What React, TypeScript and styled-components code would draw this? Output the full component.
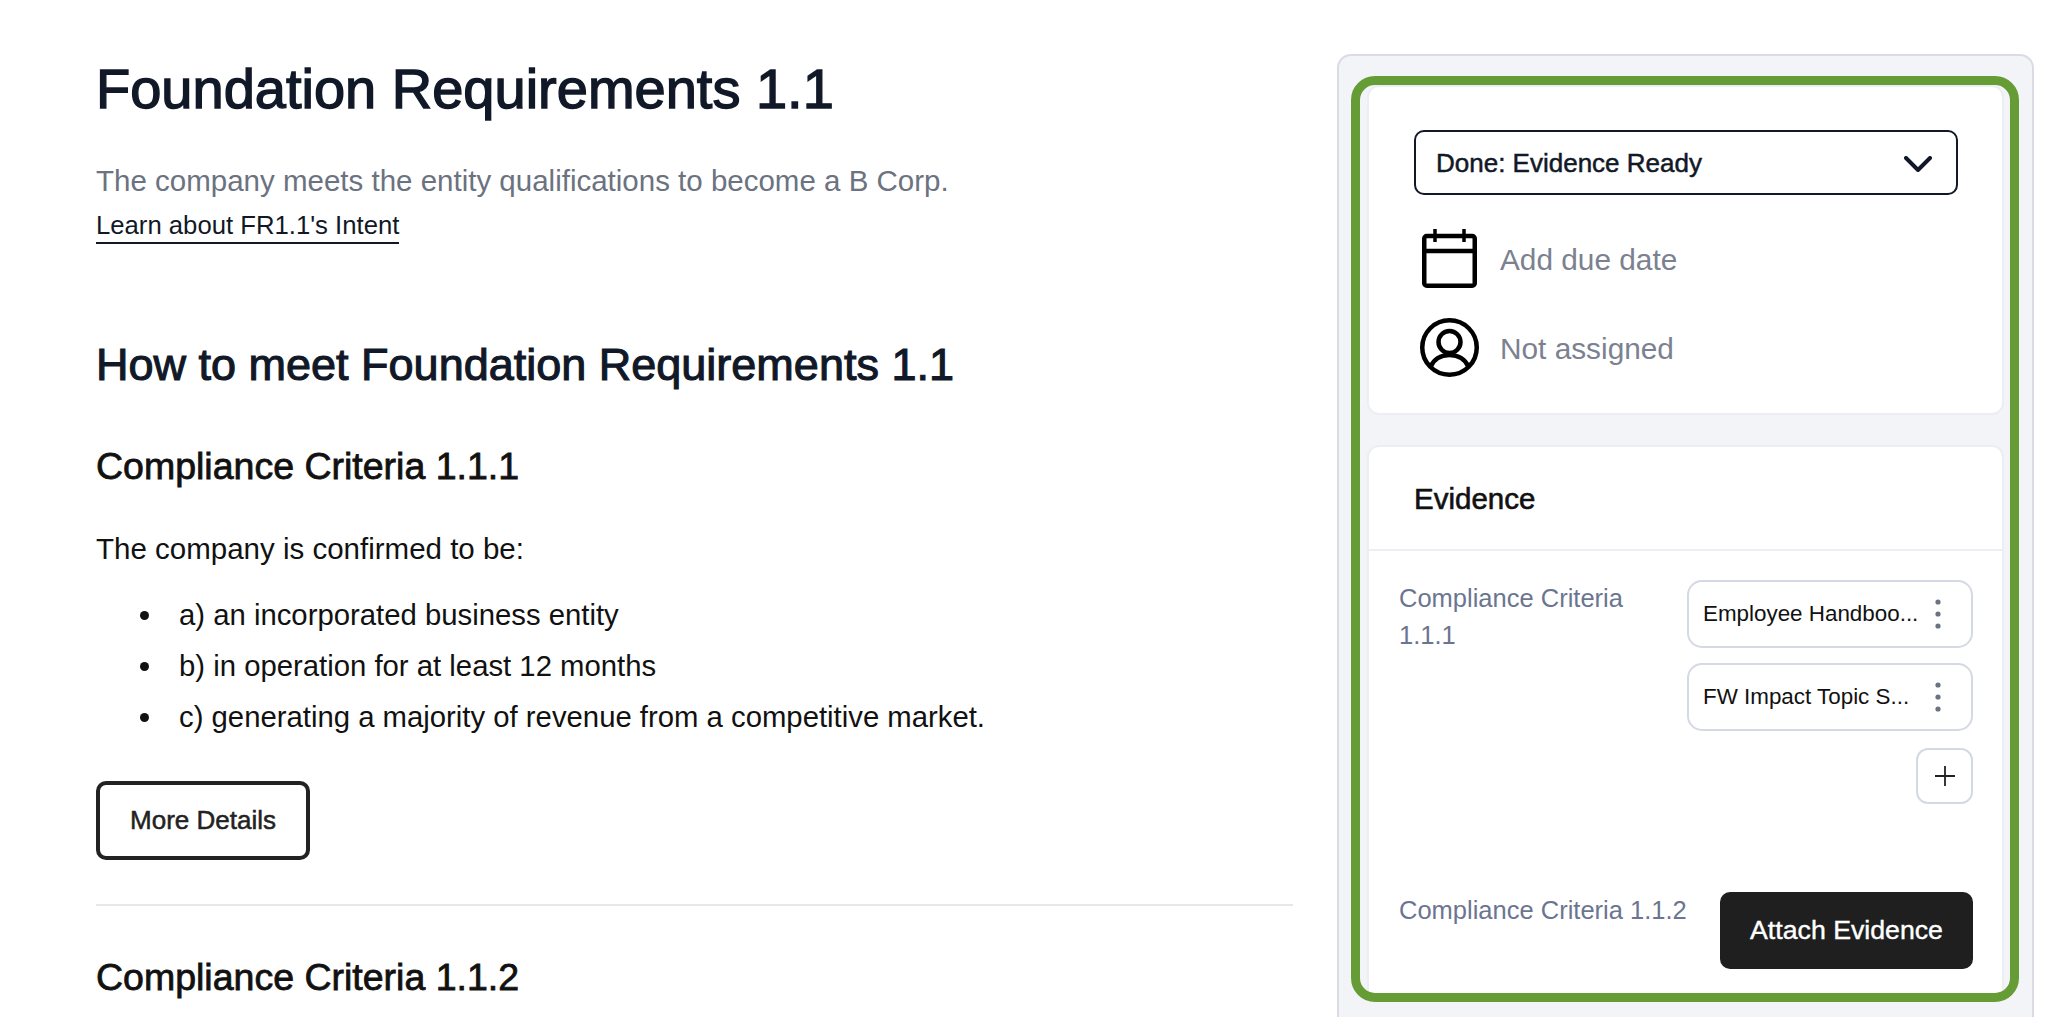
import React from "react";
import styled, { createGlobalStyle } from "styled-components";

const Global = createGlobalStyle`
  html, body { margin: 0; padding: 0; background: #fff; height: 100%; overflow: hidden; }
  body { font-family: "Liberation Sans", Arial, sans-serif; }
  * { box-sizing: border-box; }
`;

const Page = styled.div`
  display: flex;
  align-items: flex-start;
  gap: 44px;
  height: 1017px;
  padding-left: 96px;
  overflow: hidden;
`;

const Main = styled.main`
  flex: 0 0 1197px;
  display: flex;
  flex-direction: column;
  align-items: flex-start;
  padding-top: 57px;
`;

const Title = styled.h1`
  margin: 0;
  font-size: 56px;
  line-height: 64px;
  font-weight: 400;
  -webkit-text-stroke: 1.4px #111827;
  color: #111827;
`;

const Subtitle = styled.p`
  margin: 42px 0 0;
  font-size: 29.5px;
  line-height: 36px;
  color: #6b7280;
`;

const IntentLink = styled.a`
  margin-top: 10px;
  font-size: 25.7px;
  line-height: 33px;
  color: #111827;
  border-bottom: 2px solid #111827;
`;

const SectionHeading = styled.h2`
  margin: 95px 0 0;
  font-size: 45px;
  line-height: 52px;
  font-weight: 400;
  -webkit-text-stroke: 1.1px #111827;
  color: #111827;
`;

const CriteriaHeading = styled.h3<{ $top: number }>`
  margin: ${(p) => p.$top}px 0 0;
  font-size: 37.5px;
  line-height: 44px;
  font-weight: 400;
  -webkit-text-stroke: 0.8px #111;
  color: #111;
`;

const Paragraph = styled.p`
  margin: 42px 0 0;
  font-size: 29.5px;
  line-height: 38px;
  color: #111;
`;

const Bullets = styled.ul`
  margin: 28px 0 0;
  padding: 0 0 0 44px;
  list-style: none;
  display: flex;
  flex-direction: column;
  gap: 13px;
  font-size: 29.3px;
  line-height: 38px;
  color: #111;
`;

const Bullet = styled.li`
  display: flex;
  align-items: center;
  gap: 30px;

  &::before {
    content: "";
    flex: 0 0 9px;
    height: 9px;
    border-radius: 50%;
    background: #111;
  }
`;

const OutlineButton = styled.button`
  margin-top: 45px;
  width: 214px;
  height: 79px;
  border: 4px solid #222;
  border-radius: 10px;
  background: #fff;
  color: #222;
  font: 400 26px "Liberation Sans", Arial, sans-serif;
  -webkit-text-stroke: 0.5px #222;
`;

const Divider = styled.hr`
  align-self: stretch;
  margin: 44px 0 0;
  border: 0;
  height: 2px;
  background: #e5e7eb;
`;

const Panel = styled.aside`
  position: relative;
  flex: 0 0 697px;
  margin-top: 54px;
  height: 1100px;
  padding: 29px 28px 0;
  background: #f3f4f8;
  border: 2px solid #d9dce5;
  border-radius: 14px;
  display: flex;
  flex-direction: column;
  gap: 30px;
`;

const Highlight = styled.div`
  position: absolute;
  left: 12px;
  right: 13px;
  top: 20px;
  height: 926px;
  border: 9px solid #669c35;
  border-radius: 24px;
  pointer-events: none;
`;

const Card = styled.section`
  background: #fff;
  border: 2px solid #eceef3;
  border-radius: 12px;
`;

const StatusCard = styled(Card)`
  height: 330px;
  padding: 43px 44px 0 45px;
  display: flex;
  flex-direction: column;
`;

const StatusSelect = styled.div`
  height: 65px;
  display: flex;
  align-items: center;
  justify-content: space-between;
  padding: 2px 24px 0 20px;
  border: 2px solid #111827;
  border-radius: 10px;
  font-size: 26px;
  -webkit-text-stroke: 0.5px #111827;
  color: #111827;
`;

const MetaRow = styled.div<{ $top: number }>`
  margin-top: ${(p) => p.$top}px;
  display: flex;
  align-items: center;
  gap: 21px;
  padding-left: 6px;
  font-size: 29.8px;
  color: #7b8190;
`;

const MetaText = styled.span`
  padding-top: 3px;
`;

const IconSlot = styled.span`
  flex: 0 0 59px;
  display: flex;
  justify-content: center;
`;

const EvidenceCard = styled(Card)`
  height: 550px;
  border-bottom-color: transparent;
  border-radius: 12px 12px 0 0;
`;

const EvidenceHeader = styled.div`
  height: 104px;
  display: flex;
  align-items: center;
  padding: 1px 0 0 45px;
  border-bottom: 2px solid #eceef3;
  font-size: 29.5px;
  -webkit-text-stroke: 0.6px #111;
  color: #111;
`;

const EvidenceBody = styled.div`
  padding: 29px 29px 0 30px;
  display: flex;
  flex-direction: column;
  gap: 88px;
`;

const EvidenceRow = styled.div`
  display: flex;
  justify-content: space-between;
  align-items: flex-start;
`;

const CriteriaLabel = styled.div<{ $wide?: boolean }>`
  width: ${(p) => (p.$wide ? "290px" : "250px")};
  font-size: 25.5px;
  line-height: 37px;
  color: #6b7590;
`;

const Attachments = styled.div`
  width: 286px;
  display: flex;
  flex-direction: column;
  align-items: flex-end;
  gap: 15px;
`;

const Chip = styled.div`
  width: 100%;
  height: 68px;
  display: flex;
  align-items: center;
  justify-content: space-between;
  padding: 0 30px 0 14px;
  background: #fff;
  border: 2px solid #d5d9e4;
  border-radius: 15px;
  font-size: 22.4px;
  color: #111;
`;

const AddButton = styled.button`
  width: 57px;
  height: 56px;
  margin-top: 2px;
  display: flex;
  align-items: center;
  justify-content: center;
  padding: 0;
  background: #fff;
  border: 2px solid #d5d9e4;
  border-radius: 12px;
`;

const AttachButton = styled.button`
  flex: 0 0 253px;
  height: 77px;
  background: #1f1f1f;
  border: 0;
  border-radius: 10px;
  color: #fff;
  font: 400 26.7px "Liberation Sans", Arial, sans-serif;
  -webkit-text-stroke: 0.4px #fff;
`;

const Chevron = () => (
  <svg width="28" height="16" viewBox="0 0 28 16" fill="none" stroke="#111827" strokeWidth="4" strokeLinecap="round" strokeLinejoin="round">
    <path d="M2 2l12 12L26 2" />
  </svg>
);

const Calendar = () => (
  <svg width="55" height="59" viewBox="0 0 55 59" fill="none" stroke="#000" strokeWidth="4.5">
    <rect x="2.25" y="7" width="50.5" height="49.75" rx="2.5" />
    <path d="M2 22h51" />
    <path d="M13 0v13M42 0v13" strokeWidth="3.5" />
  </svg>
);

const Person = () => (
  <svg width="59" height="59" viewBox="0 0 59 59" fill="none" stroke="#000" strokeWidth="4.5">
    <circle cx="29.5" cy="29.5" r="27.25" />
    <circle cx="29.5" cy="24" r="11" />
    <path d="M10.5 49c3-7.5 10-12 19-12s16 4.500 19 12" />
  </svg>
);

const Kebab = () => (
  <svg width="6" height="30" viewBox="0 0 6 30" fill="#6b7280">
    <circle cx="3" cy="3" r="2.600" />
    <circle cx="3" cy="15" r="2.600" />
    <circle cx="3" cy="27" r="2.600" />
  </svg>
);

const Plus = () => (
  <svg width="20" height="20" viewBox="0 0 20 20" fill="none" stroke="#222" strokeWidth="1.800">
    <path d="M10 0v20M0 10h20" />
  </svg>
);

export default function App() {
  return (
    <>
      <Global />
      <Page>
        <Main>
          <Title>Foundation Requirements 1.1</Title>
          <Subtitle>The company meets the entity qualifications to become a B Corp.</Subtitle>
          <IntentLink>Learn about FR1.1's Intent</IntentLink>
          <SectionHeading>How to meet Foundation Requirements 1.1</SectionHeading>
          <CriteriaHeading $top={53}>Compliance Criteria 1.1.1</CriteriaHeading>
          <Paragraph>The company is confirmed to be:</Paragraph>
          <Bullets>
            <Bullet>a) an incorporated business entity</Bullet>
            <Bullet>b) in operation for at least 12 months</Bullet>
            <Bullet>c) generating a majority of revenue from a competitive market.</Bullet>
          </Bullets>
          <OutlineButton>More Details</OutlineButton>
          <Divider />
          <CriteriaHeading $top={49}>Compliance Criteria 1.1.2</CriteriaHeading>
        </Main>
        <Panel>
          <StatusCard>
            <StatusSelect>
              Done: Evidence Ready
              <Chevron />
            </StatusSelect>
            <MetaRow $top={34}>
              <IconSlot><Calendar /></IconSlot>
              <MetaText>Add due date</MetaText>
            </MetaRow>
            <MetaRow $top={30}>
              <IconSlot><Person /></IconSlot>
              <MetaText>Not assigned</MetaText>
            </MetaRow>
          </StatusCard>
          <EvidenceCard>
            <EvidenceHeader>Evidence</EvidenceHeader>
            <EvidenceBody>
              <EvidenceRow>
                <CriteriaLabel>Compliance Criteria 1.1.1</CriteriaLabel>
                <Attachments>
                  <Chip>Employee Handboo... <Kebab /></Chip>
                  <Chip>FW Impact Topic S... <Kebab /></Chip>
                  <AddButton aria-label="Add evidence"><Plus /></AddButton>
                </Attachments>
              </EvidenceRow>
              <EvidenceRow>
                <CriteriaLabel $wide>Compliance Criteria 1.1.2</CriteriaLabel>
                <AttachButton>Attach Evidence</AttachButton>
              </EvidenceRow>
            </EvidenceBody>
          </EvidenceCard>
          <Highlight />
        </Panel>
      </Page>
    </>
  );
}
